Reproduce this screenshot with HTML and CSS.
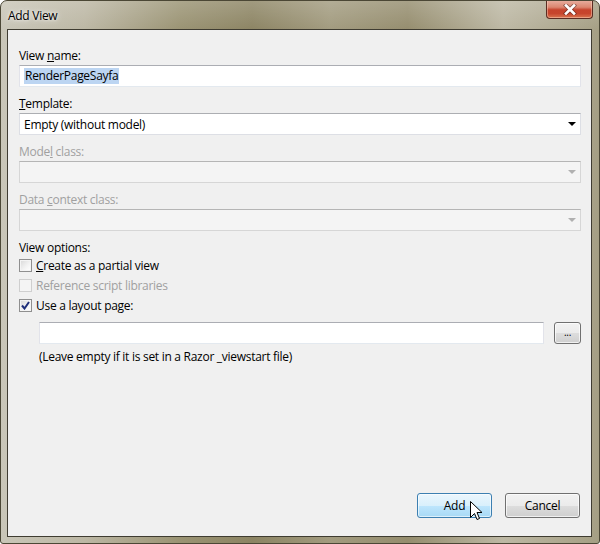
FILE: index.html
```html
<!DOCTYPE html>
<html>
<head>
<meta charset="utf-8">
<link rel="stylesheet" href="styles.css">
</head>
<body>
<div class="window">
  <div class="titlebar">
    <span class="title">Add View</span>
    <div class="close">
      <svg width="14" height="11" viewBox="0 0 14 11"><path d="M3 1.5 L11 9.5 M11 1.5 L3 9.5" stroke="#3b1a14" stroke-width="4.2" fill="none" stroke-linecap="square" opacity="0.5"/><path d="M3 1.5 L11 9.5 M11 1.5 L3 9.5" stroke="#ffffff" stroke-width="2.6" fill="none" stroke-linecap="square"/></svg>
    </div>
  </div>
  <div class="client">
    <div class="field">
      <div class="lbl">View <u>n</u>ame:</div>
      <div class="textbox"><span class="sel">RenderPageSayfa</span></div>
    </div>
    <div class="field">
      <div class="lbl"><u>T</u>emplate:</div>
      <div class="textbox combo"><span>Empty (without model)</span><span class="arrow"></span></div>
    </div>
    <div class="field disabled">
      <div class="lbl">Mode<u>l</u> class:</div>
      <div class="textbox combo"><span></span><span class="arrow"></span></div>
    </div>
    <div class="field disabled">
      <div class="lbl">Data <u>c</u>ontext class:</div>
      <div class="textbox combo"><span></span><span class="arrow"></span></div>
    </div>
    <div class="lbl opts">View options:</div>
    <div class="check"><span class="box"></span><span class="ctext"><u>C</u>reate as a partial view</span></div>
    <div class="check disabled"><span class="box"></span><span class="ctext">Reference script libraries</span></div>
    <div class="check"><span class="box checked"><svg width="9" height="9" viewBox="0 0 9 9"><path d="M1 4.5 L3.5 7.5 L8 1" stroke="#1f2f7a" stroke-width="2" fill="none"/></svg></span><span class="ctext">Use a layout page:</span></div>
    <div class="layoutrow">
      <div class="textbox grow"></div>
      <div class="btn small">...</div>
    </div>
    <div class="hint">(Leave empty if it is set in a Razor _viewstart file)</div>
    <div class="buttons">
      <div class="btn default">Add</div>
      <div class="btn">Cancel</div>
    </div>
  </div>
  <svg class="cursor" width="13" height="21" viewBox="0 0 13 21"><path d="M0.5 0.5 L0.5 16.5 L4.5 12.5 L7 18.5 L9.5 17.5 L7 11.5 L12 11.5 Z" fill="#ffffff" stroke="#000000" stroke-width="1" stroke-linejoin="miter"/></svg>
</div>
</body>
</html>
```
FILE: styles.css
```css
html, body {
  margin: 0;
  padding: 0;
  background: #ffffff;
}
body {
  font-family: "Open Sans", "Noto Sans", sans-serif;
  font-size: 12px;
  letter-spacing: -0.28px;
  color: #000;
}
.window {
  position: relative;
  width: 600px;
  height: 544px;
  box-sizing: border-box;
  padding: 0 7px 6px 6px;
  display: flex;
  flex-direction: column;
  border: 1px solid #4b4735;
  border-radius: 7px 7px 3px 3px;
  background:
    linear-gradient(180deg, rgba(255,255,255,0.18) 0%, rgba(255,255,255,0) 30px),
    linear-gradient(90deg, #c9c6b8 0%, #bcb7a4 14%, #9a9373 30%, #8c8463 42%, #a29b7f 55%, #958d6e 68%, #bdb8a4 84%, #a59f84 100%);
  overflow: hidden;
}
.titlebar {
  height: 28px;
  display: flex;
  align-items: flex-start;
  justify-content: space-between;
  flex-shrink: 0;
}
.title {
  margin: 6px 0 0 1px;
  font-size: 12px;
  color: #000;
  text-shadow: 0 0 6px rgba(255,255,255,0.9), 0 0 3px rgba(255,255,255,0.8);
}
.close {
  width: 45px;
  height: 18px;
  margin-top: -1px;
  margin-right: -1px;
  border: 1px solid #5b2c22;
  border-top: none;
  border-radius: 0 0 4px 4px;
  background: linear-gradient(180deg, #e9b1a2 0%, #db8670 40%, #c6432c 55%, #c7452d 75%, #d9744f 100%);
  box-shadow: inset 0 0 0 1px rgba(255,220,200,0.45);
  display: flex;
  align-items: center;
  justify-content: center;
}
.client {
  flex: 1;
  border: 1px solid #3f3c31;
  background: #f0f0f0;
  padding: 16px 10px 18px 11px;
  display: flex;
  flex-direction: column;
}
.lbl {
  line-height: 19px;
  height: 16px;
  margin-bottom: 3px;
}
.field {
  margin-bottom: 7px;
}
.disabled .lbl, .check.disabled {
  color: #a0a0a0;
}
.textbox {
  height: 22px;
  box-sizing: border-box;
  background: #ffffff;
  border: 1px solid #e2e3ea;
  border-top-color: #abadb3;
  border-bottom-color: #e3e9ef;
  display: flex;
  align-items: center;
  padding: 0 4px;
}
.sel {
  background: #bcd5f2;
  line-height: 16px;
  padding: 0 1px;
}
.combo {
  justify-content: space-between;
  padding: 0 4px 0 4px;
  border: 1px solid #dddfe5;
  border-top-color: #acaeb2;
}
.disabled .combo {
  background: #f4f4f4;
  border-color: #d6d6d6;
  border-top-color: #b5b5b5;
}
.arrow {
  width: 0;
  height: 0;
  border-left: 4px solid transparent;
  border-right: 4px solid transparent;
  border-top: 4px solid #000;
  margin-right: 0;
}
.disabled .arrow {
  border-top-color: #b0b0b0;
}
.opts {
  margin-bottom: 0;
}
.check {
  height: 20px;
  display: flex;
  align-items: center;
  line-height: 16px;
}
.ctext {
  padding-top: 3px;
}
.box {
  width: 13px;
  height: 13px;
  box-sizing: border-box;
  border: 1px solid #8f8f8f;
  background: linear-gradient(135deg, #d8d8d8 0%, #f4f4f4 60%, #ffffff 100%);
  box-shadow: inset 0 0 0 1px #f4f4f4;
  margin-right: 4px;
  margin-top: 2px;
  display: flex;
  align-items: center;
  justify-content: center;
}
.check.disabled .box {
  border-color: #cfcfcf;
  background: #f4f4f4;
  box-shadow: none;
}
.layoutrow {
  display: flex;
  align-items: center;
  margin: 8px 0 0 20px;
}
.grow {
  flex: 1;
}
.btn {
  height: 25px;
  box-sizing: border-box;
  border: 1px solid #707070;
  border-radius: 3px;
  background: linear-gradient(180deg, #f2f2f2 0%, #ebebeb 50%, #dddddd 51%, #cfcfcf 100%);
  box-shadow: inset 0 0 0 1px rgba(255,255,255,0.7);
  display: flex;
  align-items: center;
  justify-content: center;
  line-height: 16px;
}
.btn.small {
  width: 27px;
  height: 22px;
  margin-left: 10px;
  font-size: 10px;
  padding-bottom: 2px;
}
.hint {
  line-height: 19px;
  height: 16px;
  margin: 3px 0 0 20px;
}
.buttons {
  margin-top: auto;
  display: flex;
  justify-content: flex-end;
  gap: 13px;
  margin-right: 1px;
}
.buttons .btn {
  width: 75px;
}
.btn.default {
  border-color: #3c7fb1;
  background: linear-gradient(180deg, #eaf6fd 0%, #d9f0fc 50%, #bee6fd 51%, #a7d9f5 100%);
  box-shadow: inset 0 0 0 1px rgba(255,255,255,0.6);
}
.cursor {
  position: absolute;
  left: 469px;
  top: 500px;
}
```
